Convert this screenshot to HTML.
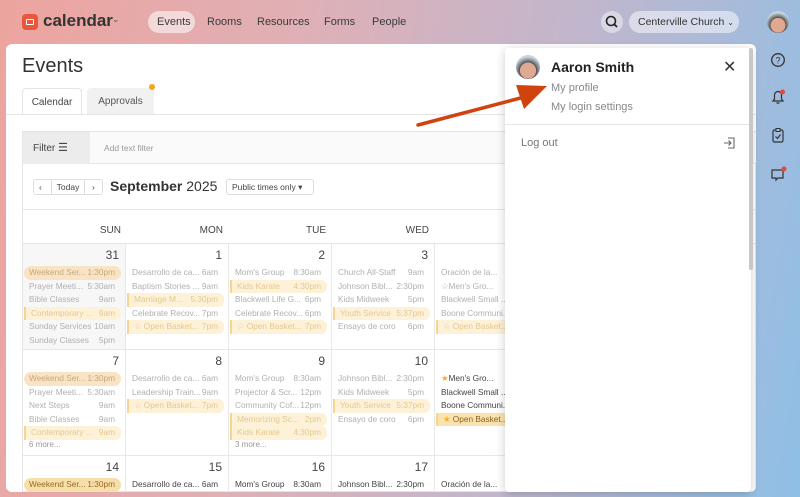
<!DOCTYPE html>
<html><head><meta charset="utf-8"><style>
*{box-sizing:border-box;margin:0;padding:0}
html,body{width:800px;height:497px;overflow:hidden}
body{font-family:"Liberation Sans",sans-serif;position:relative;background:linear-gradient(100deg,#eda49e 0%,#dfb0b6 35%,#c2b6cc 65%,#8fbfe6 100%)}
.abs{position:absolute}
.nav{font-size:11px;color:#3a3a3a;top:16px}
.main{left:6px;top:44px;width:750px;height:448px;background:#fff;border-radius:6px;overflow:hidden}
.cell{position:absolute;border-right:1px solid #e8e8e8;border-bottom:1px solid #e8e8e8;width:103px;height:106px;padding:4px 0 0 0;overflow:hidden}
.dn{text-align:right;font-size:12px;color:#444;padding-right:6px;height:18px}
.ev{display:flex;justify-content:space-between;font-size:8.3px;color:#b0b0b0;height:13.5px;line-height:13px;padding:0 6px 0 5px;margin:0 4px 0 1px;white-space:nowrap}
.p{background:#fdf1d8;border-radius:6px;color:#e4c992}
.b{border-left:2px solid #f6d591;border-radius:0 6px 6px 0}
.w{background:#f8e4c4;color:#c9a77a;border-radius:7px}
.dk{color:#444}
.more{font-size:8px;color:#999;padding-left:6px}
.hd{position:absolute;top:181px;font-size:10px;color:#444;text-align:right;width:100px}
.side svg{position:absolute;left:770px}
</style></head><body>
<div class="abs" style="left:22px;top:14px;width:16px;height:16px;background:#e8563c;border-radius:4px"><div style="position:absolute;left:4px;top:5px;width:8px;height:6px;border:1.5px solid #fff;border-radius:1px"></div></div>
<div class="abs" style="left:43px;top:11px;font-size:17px;font-weight:bold;color:#333">calendar</div>
<div class="abs" style="left:112px;top:14px;font-size:9px;color:#555">⌄</div>
<div class="abs" style="left:148px;top:11px;width:47px;height:22px;background:rgba(255,255,255,.55);border-radius:11px"></div>
<div class="abs nav" style="left:157px">Events</div>
<div class="abs nav" style="left:207px">Rooms</div>
<div class="abs nav" style="left:257px">Resources</div>
<div class="abs nav" style="left:324px">Forms</div>
<div class="abs nav" style="left:372px">People</div>
<div class="abs" style="left:601px;top:11px;width:22px;height:22px;border-radius:11px;background:rgba(255,255,255,.45)"><svg width="22" height="22"><circle cx="10" cy="10" r="4.5" fill="none" stroke="#222" stroke-width="1.6"/><line x1="13.3" y1="13.3" x2="16" y2="16" stroke="#222" stroke-width="1.8"/></svg></div>
<div class="abs" style="left:629px;top:11px;width:110px;height:22px;border-radius:11px;background:rgba(255,255,255,.5);font-size:10.5px;color:#333;line-height:22px;padding-left:9px">Centerville Church <span style="font-size:8px">⌄</span></div>
<div class="abs" style="left:767px;top:11px;width:22px;height:22px;border-radius:11px;background:radial-gradient(circle at 50% 65%,#e0a890 0 40%,#555 42%,#c9d4de 70%)"></div>
<div class="side">
<svg class="abs" style="top:52px" width="16" height="16"><circle cx="8" cy="8" r="6.3" fill="none" stroke="#333" stroke-width="1.3"/><text x="8" y="11.5" font-size="9" text-anchor="middle" fill="#333" font-family="Liberation Sans">?</text></svg>
<svg class="abs" style="top:88px" width="16" height="18"><path d="M3 13h10l-1.5-2V7a3.5 3.5 0 0 0-7 0v4z M6.5 15h3" fill="none" stroke="#333" stroke-width="1.2"/><circle cx="12.5" cy="4" r="2.5" fill="#e24a3b"/></svg>
<svg class="abs" style="top:127px" width="16" height="18"><rect x="3" y="3" width="10" height="12" rx="1.5" fill="none" stroke="#333" stroke-width="1.2"/><rect x="6" y="1.5" width="4" height="3" fill="#a8c2dc" stroke="#333" stroke-width="1"/><path d="M5.5 9.5l2 2 3-4" fill="none" stroke="#333" stroke-width="1.2"/></svg>
<svg class="abs" style="top:165px" width="18" height="18"><path d="M2 5h11v8H8l-2 2v-2H2z" fill="none" stroke="#333" stroke-width="1.2"/><circle cx="14" cy="4" r="2.5" fill="#e24a3b"/></svg>
</div>
<div class="main abs">
<div class="abs" style="left:16px;top:11px;font-size:20px;color:#333">Events</div>
<div class="abs" style="left:16px;top:44px;width:60px;height:27px;border:1px solid #e4e4e4;border-bottom:none;border-radius:4px 4px 0 0;background:#fff;font-size:10px;color:#444;text-align:center;line-height:27px">Calendar</div>
<div class="abs" style="left:81px;top:44px;width:67px;height:27px;background:#f1f1f1;border-radius:4px 4px 0 0;font-size:10px;color:#555;text-align:center;line-height:27px">Approvals</div>
<div class="abs" style="left:143px;top:40px;width:6px;height:6px;border-radius:3px;background:#f0a818"></div>
<div class="abs" style="left:0;top:70px;width:750px;height:1px;background:#e6e6e6"></div>
<div class="abs" style="left:16px;top:87px;width:734px;height:361px;border:1px solid #e6e6e6"></div>
<div class="abs" style="left:17px;top:88px;width:67px;height:32px;background:#ececec;font-size:10px;color:#444;line-height:32px;padding-left:10px">Filter <span style="font-size:11px">☰</span></div>
<div class="abs" style="left:84px;top:88px;width:666px;height:32px;background:#fafafa;border-bottom:1px solid #e6e6e6;font-size:8.5px;color:#999;line-height:32px;padding-left:14px">Add text filter</div>
<div class="abs" style="left:27px;top:135px;width:70px;height:16px;border:1px solid #ddd;border-radius:3px;font-size:8.5px;color:#444;line-height:14px"><span style="position:absolute;left:5px">‹</span><span style="position:absolute;left:17px;top:0;width:34px;height:14px;border-left:1px solid #ddd;border-right:1px solid #ddd;text-align:center">Today</span><span style="position:absolute;left:58px">›</span></div>
<div class="abs" style="left:104px;top:134px;font-size:14px;color:#333"><b>September</b> 2025</div>
<div class="abs" style="left:220px;top:135px;width:88px;height:16px;border:1px solid #ddd;border-radius:3px;font-size:8.5px;color:#444;line-height:14px;padding-left:5px">Public times only ▾</div>
<div class="abs" style="left:17px;top:165px;width:733px;height:1px;background:#e6e6e6"></div>
<div class="hd" style="left:15px">SUN</div><div class="hd" style="left:117px">MON</div><div class="hd" style="left:220px">TUE</div><div class="hd" style="left:323px">WED</div>
<div class="abs" style="left:17px;top:199px;width:733px;height:1px;background:#e6e6e6"></div>
<div class="cell" style="left:17px;top:200px;background:#f7f7f7"><div class="dn">31</div>
<div class="ev w"><span>Weekend Ser...</span><span>1:30pm</span></div><div class="ev"><span>Prayer Meeti...</span><span>5:30am</span></div><div class="ev"><span>Bible Classes</span><span>9am</span></div><div class="ev p b"><span>Contemporary ...</span><span>9am</span></div><div class="ev"><span>Sunday Services</span><span>10am</span></div><div class="ev"><span>Sunday Classes</span><span>5pm</span></div></div>
<div class="cell" style="left:120px;top:200px"><div class="dn">1</div>
<div class="ev"><span>Desarrollo de ca...</span><span>6am</span></div><div class="ev"><span>Baptism Stories ...</span><span>9am</span></div><div class="ev p b"><span>Marriage M...</span><span>5:30pm</span></div><div class="ev"><span>Celebrate Recov...</span><span>7pm</span></div><div class="ev p b"><span>☆ Open Basket...</span><span>7pm</span></div></div>
<div class="cell" style="left:223px;top:200px"><div class="dn">2</div>
<div class="ev"><span>Mom's Group</span><span>8:30am</span></div><div class="ev p b"><span>Kids Karate</span><span>4:30pm</span></div><div class="ev"><span>Blackwell Life G...</span><span>6pm</span></div><div class="ev"><span>Celebrate Recov...</span><span>6pm</span></div><div class="ev p b"><span>☆ Open Basket...</span><span>7pm</span></div></div>
<div class="cell" style="left:326px;top:200px"><div class="dn">3</div>
<div class="ev"><span>Church All-Staff</span><span>9am</span></div><div class="ev"><span>Johnson Bibl...</span><span>2:30pm</span></div><div class="ev"><span>Kids Midweek</span><span>5pm</span></div><div class="ev p b"><span>Youth Service</span><span>5:37pm</span></div><div class="ev"><span>Ensayo de coro</span><span>6pm</span></div></div>
<div class="cell" style="left:429px;top:200px"><div class="dn">&nbsp;</div>
<div class="ev"><span>Oración de la...</span><span>6</span></div><div class="ev"><span>☆Men's Gro...</span><span>6</span></div><div class="ev"><span>Blackwell Small ...</span><span></span></div><div class="ev"><span>Boone Communi...</span><span></span></div><div class="ev p b"><span>☆ Open Basket...</span><span></span></div></div>
<div class="cell" style="left:17px;top:306px"><div class="dn">7</div>
<div class="ev w"><span>Weekend Ser...</span><span>1:30pm</span></div><div class="ev"><span>Prayer Meeti...</span><span>5:30am</span></div><div class="ev"><span>Next Steps</span><span>9am</span></div><div class="ev"><span>Bible Classes</span><span>9am</span></div><div class="ev p b"><span>Contemporary ...</span><span>9am</span></div><div class="more">6 more...</div></div>
<div class="cell" style="left:120px;top:306px"><div class="dn">8</div>
<div class="ev"><span>Desarrollo de ca...</span><span>6am</span></div><div class="ev"><span>Leadership Train...</span><span>9am</span></div><div class="ev p b"><span>☆ Open Basket...</span><span>7pm</span></div></div>
<div class="cell" style="left:223px;top:306px"><div class="dn">9</div>
<div class="ev"><span>Mom's Group</span><span>8:30am</span></div><div class="ev"><span>Projector &amp; Scr...</span><span>12pm</span></div><div class="ev"><span>Community Cof...</span><span>12pm</span></div><div class="ev p b"><span>Memorizing Sc...</span><span>2pm</span></div><div class="ev p b"><span>Kids Karate</span><span>4:30pm</span></div><div class="more">3 more...</div></div>
<div class="cell" style="left:326px;top:306px"><div class="dn">10</div>
<div class="ev"><span>Johnson Bibl...</span><span>2:30pm</span></div><div class="ev"><span>Kids Midweek</span><span>5pm</span></div><div class="ev p b"><span>Youth Service</span><span>5:37pm</span></div><div class="ev"><span>Ensayo de coro</span><span>6pm</span></div></div>
<div class="cell" style="left:429px;top:306px"><div class="dn">&nbsp;</div>
<div class="ev dk"><span><span style="color:#f0b030">★</span>Men's Gro...</span><span>6</span></div><div class="ev dk"><span>Blackwell Small ...</span><span></span></div><div class="ev dk"><span>Boone Communi...</span><span></span></div><div class="ev p b" style="color:#8a6020;background:#fbe3b0"><span><span style="color:#f0b030">★</span> Open Basket...</span><span></span></div></div>
<div class="cell" style="left:17px;top:412px"><div class="dn">14</div><div class="ev w" style="color:#9a6a2a;background:#f6dfa8"><span>Weekend Ser...</span><span>1:30pm</span></div></div>
<div class="cell" style="left:120px;top:412px"><div class="dn">15</div><div class="ev dk"><span>Desarrollo de ca...</span><span>6am</span></div></div>
<div class="cell" style="left:223px;top:412px"><div class="dn">16</div><div class="ev dk"><span>Mom's Group</span><span>8:30am</span></div></div>
<div class="cell" style="left:326px;top:412px"><div class="dn">17</div><div class="ev dk"><span>Johnson Bibl...</span><span>2:30pm</span></div></div>
<div class="cell" style="left:429px;top:412px"><div class="dn">&nbsp;</div><div class="ev dk"><span>Oración de la...</span><span>6</span></div></div>
</div>
<div class="abs" style="left:505px;top:48px;width:246px;height:444px;background:#fff;border-radius:4px;box-shadow:0 2px 10px rgba(0,0,0,.2)">
<div class="abs" style="left:11px;top:7px;width:24px;height:24px;border-radius:12px;background:radial-gradient(circle at 50% 65%,#e0a890 0 40%,#555 42%,#c9d4de 70%)"></div>
<div class="abs" style="left:46px;top:11px;font-size:14px;font-weight:bold;color:#222">Aaron Smith</div>
<div class="abs" style="left:218px;top:9px;font-size:16px;color:#333">✕</div>
<div class="abs" style="left:46px;top:34px;font-size:11px;color:#888">My profile</div>
<div class="abs" style="left:46px;top:53px;font-size:11px;color:#888">My login settings</div>
<div class="abs" style="left:0;top:76px;width:246px;height:1px;background:#e6e6e6"></div>
<div class="abs" style="left:16px;top:89px;font-size:11px;color:#777">Log out</div>
<svg class="abs" style="left:217px;top:88px" width="14" height="14"><path d="M6 2h6v10H6 M2 7h7 M6.5 4.5L9 7l-2.5 2.5" fill="none" stroke="#666" stroke-width="1.1"/></svg>
<div class="abs" style="left:244px;top:0;width:4px;height:222px;background:#c8c8c8;border-radius:2px"></div>
</div>
<svg class="abs" style="left:0;top:0" width="800" height="497"><line x1="418" y1="125" x2="528" y2="96" stroke="#d1420f" stroke-width="3.5" stroke-linecap="round"/><polygon points="547,86 516,85 524,109" fill="#d1420f"/></svg>
</body></html>
